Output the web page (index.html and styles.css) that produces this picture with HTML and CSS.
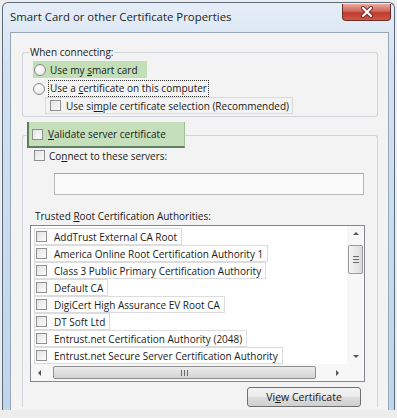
FILE: index.html
```html
<!DOCTYPE html>
<html lang="en">
  <head>
    <meta charset="UTF-8" />
    <title>Smart Card or other Certificate Properties</title>
    <link rel="stylesheet" href="styles.css">
  </head>
  <body>
    <div class="window">
      <div class="titlebar">
        <span class="title">Smart Card or other Certificate Properties</span>
        <span class="close-btn">
          <svg width="14" height="12" viewBox="0 0 14 12">
            <path d="M3 2 L11 10 M11 2 L3 10" stroke="#6b2a22" stroke-width="4" stroke-linecap="round" />
            <path d="M3 2 L11 10 M11 2 L3 10" stroke="#ffffff" stroke-width="2.2" stroke-linecap="round" />
          </svg>
        </span>
      </div>

      <div class="client">
        <!-- When connecting group -->
        <fieldset class="group group-connect">
          <legend class="group-title">When connecting:</legend>
          <label class="opt opt-smart">
            <span class="radio"></span>
            <span>Use my <u>s</u>mart card</span>
          </label>
          <label class="opt opt-computer">
            <span class="radio"></span>
            <span class="focus-text">Use a <u>c</u>ertificate on this computer</span>
          </label>
          <label class="opt opt-simple">
            <span class="check"></span>
            <span>Use si<u>m</u>ple certificate selection (Recommended)</span>
          </label>
        </fieldset>

        <!-- Validate server group -->
        <fieldset class="group group-validate">
          <legend class="validate-title">
            <span class="check"></span>
            <span><u>V</u>alidate server certificate</span>
          </legend>
          <div class="group-body">
            <label class="opt opt-connect">
              <span class="check"></span>
              <span>Co<u>n</u>nect to these servers:</span>
            </label>
            <div class="servers-input"></div>
            <div class="list-label">Trusted <u>R</u>oot Certification Authorities:</div>

            <div class="cert-list">
              <div class="cert-items">
                <div class="cert-item"><span class="check"></span>AddTrust External CA Root</div>
                <div class="cert-item"><span class="check"></span>America Online Root Certification Authority 1</div>
                <div class="cert-item"><span class="check"></span>Class 3 Public Primary Certification Authority</div>
                <div class="cert-item"><span class="check"></span>Default CA</div>
                <div class="cert-item"><span class="check"></span>DigiCert High Assurance EV Root CA</div>
                <div class="cert-item"><span class="check"></span>DT Soft Ltd</div>
                <div class="cert-item"><span class="check"></span>Entrust.net Certification Authority (2048)</div>
                <div class="cert-item"><span class="check"></span>Entrust.net Secure Server Certification Authority</div>
              </div>

              <div class="vscroll">
                <span class="arrow arrow-up"></span>
                <div class="vtrack">
                  <div class="vthumb"><span class="grip-h"></span></div>
                </div>
                <span class="arrow arrow-down"></span>
              </div>

              <div class="hscroll">
                <span class="arrow arrow-left"></span>
                <div class="htrack">
                  <div class="hthumb"><span class="grip-v"></span></div>
                </div>
                <span class="arrow arrow-right"></span>
              </div>
              <div class="corner"></div>
            </div>

            <button class="view-btn" type="button">Vi<u>e</u>w Certificate</button>
          </div>
        </fieldset>
      </div>
    </div>
  </body>
</html>
```

FILE: styles.css
```css
body {
  margin: 0;
  width: 397px;
  height: 418px;
  overflow: hidden;
  background: #ededed;
  font-family: "Open Sans", "Liberation Sans", Arial, sans-serif;
  font-size: 10px;
  color: #1a1a1a;
}
u {
  text-decoration-thickness: 1px;
  text-underline-offset: 1px;
}

.window {
  margin: 2px 0 0 2px;
  width: 393px;
  height: 408px;
  box-sizing: border-box;
  border: 1px solid #5d6c7d;
  border-bottom: none;
  border-radius: 6px 6px 0 0;
  background: linear-gradient(#e6eef7, #d3e2f2 60px, #bfd5ec);
  padding: 0 5px 0 7px;
  display: flex;
  flex-direction: column;
}

.titlebar {
  height: 29px;
  display: flex;
  align-items: flex-start;
  justify-content: space-between;
}
.title {
  margin-top: 6px;
  font-size: 11.4px;
  color: #1e1e1e;
}
.close-btn {
  margin: 1px -2px 0 0;
  width: 47px;
  height: 16px;
  border: 1px solid #6e2e28;
  border-top: none;
  border-radius: 0 0 4px 4px;
  background: linear-gradient(#e9a99e, #d0685c 45%, #c0392e 55%, #cf5a48);
  display: flex;
  align-items: center;
  justify-content: center;
}

.client {
  flex: 1;
  border: 1px solid #97a7b8;
  border-bottom: none;
  background: #f3f3f3;
  padding: 12px 10px 0 11px;
  overflow: hidden;
}

.group {
  margin: 0;
  padding: 0;
  border: 1px solid #cfd5da;
  border-radius: 3px;
  min-width: 0;
}
.group-title {
  margin-left: 6px;
  padding: 0 1px;
  line-height: 14px;
}

.opt {
  display: flex;
  align-items: center;
  height: 17px;
  box-sizing: border-box;
  white-space: nowrap;
}
.opt-smart {
  margin: 2px 0 0 10px;
  width: 114px;
  padding-left: 1px;
  gap: 4px;
  background: #c3dfb8;
}
.opt-computer {
  margin: 2px 0 0 10px;
  gap: 3px;
}
.focus-text {
  border: 1px dotted #333;
  padding: 0 1px;
  line-height: 15px;
}
.opt-simple {
  margin: 0 0 2px 22px;
  width: 248px;
  padding-left: 4px;
  gap: 5px;
  border: 1px solid #dadada;
}

.radio {
  width: 12px;
  height: 12px;
  box-sizing: border-box;
  border: 1px solid #8a8a8a;
  border-radius: 50%;
  background: radial-gradient(circle at 40% 40%, #ffffff, #e3e3e3);
  flex-shrink: 0;
}
.check {
  width: 11px;
  height: 11px;
  box-sizing: border-box;
  border: 1px solid #8e8f8f;
  background: linear-gradient(135deg, #e4e4e4, #fbfbfb);
  flex-shrink: 0;
}

.group-validate {
  margin-top: 5px;
  border-bottom: none;
  border-radius: 3px 3px 0 0;
}
.validate-title {
  margin-left: 4px;
  padding: 0 0 0 3px;
  width: 158px;
  height: 26px;
  box-sizing: border-box;
  display: flex;
  align-items: center;
  gap: 5px;
  background: #c4dfba;
  border-left: 2px solid #5c7f5f;
  border-bottom: 2px solid #5c7f5f;
  border-right: 1px solid #9ebf98;
}

.group-body {
  display: flex;
  flex-direction: column;
}
.opt-connect {
  margin-left: 11px;
  height: 15px;
  gap: 4px;
}
.servers-input {
  margin: 10px 13px 0 31px;
  height: 22px;
  box-sizing: border-box;
  border: 1px solid #b5b8bd;
  border-top-color: #a3a6ab;
  background: #fafafa;
}
.list-label {
  margin: 14px 0 0 12px;
  line-height: 14px;
}

.cert-list {
  margin: 2px 12px 0 7px;
  height: 157px;
  box-sizing: border-box;
  border: 1px solid #828790;
  background: #ffffff;
  display: grid;
  grid-template-columns: 1fr 17px;
  grid-template-rows: 1fr 17px;
  overflow: hidden;
}
.cert-items {
  padding: 2px 0 0 3px;
  overflow: hidden;
}
.cert-item {
  display: flex;
  align-items: center;
  gap: 7px;
  width: fit-content;
  height: 17px;
  box-sizing: border-box;
  padding: 0 4px 0 1px;
  border: 1px solid #dcdcdc;
  white-space: nowrap;
}

.vscroll {
  display: flex;
  flex-direction: column;
  align-items: center;
  background: #f7f7f7;
}
.vtrack {
  flex: 1;
  width: 100%;
  padding-top: 8px;
  box-sizing: border-box;
}
.vthumb {
  margin: 0 auto;
  width: 15px;
  height: 29px;
  box-sizing: border-box;
  border: 1px solid #9b9b9b;
  border-radius: 2px;
  background: linear-gradient(90deg, #f4f4f4, #dcdcdc);
  display: flex;
  align-items: center;
  justify-content: center;
}
.grip-h {
  width: 6px;
  height: 5px;
  border-top: 1px solid #6a6a6a;
  border-bottom: 1px solid #6a6a6a;
  background: linear-gradient(transparent 2px, #6a6a6a 2px, #6a6a6a 3px, transparent 3px);
}

.hscroll {
  display: flex;
  align-items: center;
  background: #f7f7f7;
}
.htrack {
  flex: 1;
  height: 100%;
  padding: 2px 0 0 10px;
  box-sizing: border-box;
}
.hthumb {
  width: 263px;
  height: 13px;
  box-sizing: border-box;
  border: 1px solid #8f8f8f;
  border-radius: 2px;
  background: linear-gradient(#ececec, #d2d2d2);
  display: flex;
  align-items: center;
  justify-content: center;
}
.grip-v {
  width: 5px;
  height: 6px;
  border-left: 1px solid #6a6a6a;
  border-right: 1px solid #6a6a6a;
  background: linear-gradient(90deg, transparent 2px, #6a6a6a 2px, #6a6a6a 3px, transparent 3px);
}
.corner {
  background: #f7f7f7;
}

.arrow {
  width: 0;
  height: 0;
  flex-shrink: 0;
}
.arrow-up {
  margin: 6px 0 2px;
  border-left: 3px solid transparent;
  border-right: 3px solid transparent;
  border-bottom: 3px solid #555;
}
.arrow-down {
  margin: 2px 0 6px;
  border-left: 3px solid transparent;
  border-right: 3px solid transparent;
  border-top: 3px solid #555;
}
.arrow-left {
  margin: 0 2px 0 7px;
  border-top: 3px solid transparent;
  border-bottom: 3px solid transparent;
  border-right: 3px solid #555;
}
.arrow-right {
  margin: 0 8px 0 2px;
  border-top: 3px solid transparent;
  border-bottom: 3px solid transparent;
  border-left: 3px solid #555;
}

.view-btn {
  align-self: flex-end;
  margin: 5px 16px 0 0;
  width: 114px;
  height: 20px;
  padding: 0;
  border: 1px solid #707070;
  border-radius: 3px;
  background: linear-gradient(#f2f2f2, #ebebeb 50%, #dddddd 50%, #cfcfcf);
  font-family: inherit;
  font-size: 10.5px;
  color: #1a1a1a;
}
```
